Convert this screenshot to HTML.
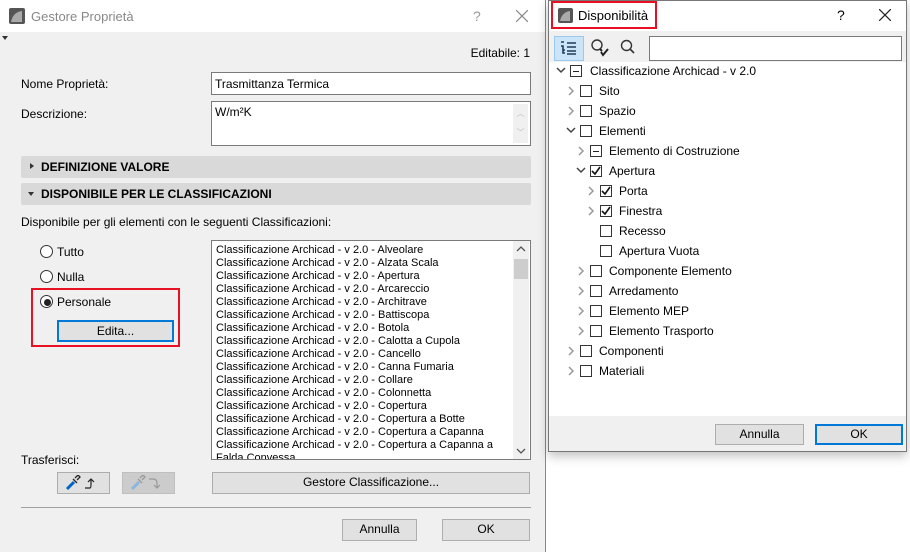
<!DOCTYPE html>
<html><head><meta charset="utf-8"><style>
*{box-sizing:border-box;margin:0;padding:0}
body{width:910px;height:552px;position:relative;background:#fff;font-family:"Liberation Sans",sans-serif;font-size:12px;color:#000;overflow:hidden}
.a{position:absolute;white-space:nowrap}
.btn{position:absolute;background:#e1e1e1;border:1px solid #adadad;text-align:center;line-height:19px}
.cb{position:absolute;width:12px;height:12px;border:1px solid #333;background:#fff}
.t{position:absolute;white-space:nowrap;line-height:14px}
.rad{position:absolute;width:13px;height:13px;border:1px solid #333;border-radius:50%;background:#fff}
</style></head><body>
<!-- Left dialog -->
<div class="a" style="left:0;top:0;width:546px;height:552px;background:#f0f0f0;border-right:1px solid #888"></div>
<div class="a" style="left:0;top:0;width:545px;height:32px;background:#fff"></div>
<svg class="a" style="left:9px;top:8px" width="16" height="16"><rect width="16" height="16" rx="2" fill="#555"/><path d="M2 14 Q4 4 13 3 L13 14 Z" fill="#aaa"/></svg>
<div class="a" style="left:31px;top:9px;color:#888;font-size:13px">Gestore Proprietà</div>
<div class="a" style="left:473px;top:8px;color:#999;font-size:14px">?</div>
<svg class="a" style="left:516px;top:10px" width="12" height="12"><path d="M0 0L12 12M12 0L0 12" stroke="#888" stroke-width="1.2"/></svg>
<div class="a" style="left:2px;top:36px;width:0;height:0;border-left:3px solid transparent;border-right:3px solid transparent;border-top:4px solid #333"></div>
<div class="a" style="top:46px;left:450px;text-align:right;width:80px">Editabile: 1</div>
<div class="a" style="left:21px;top:77px">Nome Proprietà:</div>
<div class="a" style="left:211px;top:72px;width:320px;height:23px;background:#fff;border:1px solid #7a7a7a;padding:4px 3px">Trasmittanza Termica</div>
<div class="a" style="left:21px;top:107px">Descrizione:</div>
<div class="a" style="left:211px;top:101px;width:320px;height:45px;background:#fff;border:1px solid #7a7a7a;padding:3px 3px">W/m²K</div>
<div class="a" style="left:513px;top:104px;width:15px;height:39px;background:#f0f0f0;color:#bbb;font-size:8px;text-align:center;line-height:19px">︿<br>﹀</div>
<div class="a" style="left:21px;top:156px;width:510px;height:22px;background:#d9d9d9;border-radius:2px"></div>
<div class="a" style="left:30px;top:163px;width:0;height:0;border-top:3px solid transparent;border-bottom:3px solid transparent;border-left:4px solid #333"></div>
<div class="a" style="left:41px;top:160px;font-weight:bold">DEFINIZIONE VALORE</div>
<div class="a" style="left:21px;top:183px;width:510px;height:22px;background:#d9d9d9;border-radius:2px"></div>
<div class="a" style="left:28px;top:192px;width:0;height:0;border-left:3px solid transparent;border-right:3px solid transparent;border-top:4px solid #333"></div>
<div class="a" style="left:41px;top:187px;font-weight:bold">DISPONIBILE PER LE CLASSIFICAZIONI</div>
<div class="a" style="left:21px;top:215px">Disponibile per gli elementi con le seguenti Classificazioni:</div>
<div class="rad" style="left:40px;top:245px"></div><div class="a" style="left:57px;top:245px">Tutto</div>
<div class="rad" style="left:40px;top:270px"></div><div class="a" style="left:57px;top:270px">Nulla</div>
<div class="rad" style="left:40px;top:295px"></div><div class="a" style="left:44px;top:299px;width:7px;height:7px;border-radius:50%;background:#222"></div><div class="a" style="left:57px;top:295px">Personale</div>
<div class="a" style="left:31px;top:288px;width:149px;height:59px;border:2px solid #e81123"></div>
<div class="btn" style="left:57px;top:320px;width:117px;height:22px;border:2px solid #0078d7;line-height:18px">Edita...</div>
<div class="a" style="left:211px;top:240px;width:320px;height:220px;background:#fff;border:1px solid #7a7a7a;overflow:hidden;padding:3px 4px;line-height:13px;font-size:11px;white-space:normal;padding-right:26px">
Classificazione Archicad - v 2.0 - Alveolare<br>Classificazione Archicad - v 2.0 - Alzata Scala<br>Classificazione Archicad - v 2.0 - Apertura<br>Classificazione Archicad - v 2.0 - Arcareccio<br>Classificazione Archicad - v 2.0 - Architrave<br>Classificazione Archicad - v 2.0 - Battiscopa<br>Classificazione Archicad - v 2.0 - Botola<br>Classificazione Archicad - v 2.0 - Calotta a Cupola<br>Classificazione Archicad - v 2.0 - Cancello<br>Classificazione Archicad - v 2.0 - Canna Fumaria<br>Classificazione Archicad - v 2.0 - Collare<br>Classificazione Archicad - v 2.0 - Colonnetta<br>Classificazione Archicad - v 2.0 - Copertura<br>Classificazione Archicad - v 2.0 - Copertura a Botte<br>Classificazione Archicad - v 2.0 - Copertura a Capanna<br>Classificazione Archicad - v 2.0 - Copertura a Capanna a<br>Falda Convessa</div>
<div class="a" style="left:513px;top:241px;width:16px;height:218px;background:#f0f0f0"></div>
<div class="a" style="left:514px;top:259px;width:14px;height:20px;background:#cdcdcd"></div>
<svg class="a" style="left:516px;top:246px" width="10" height="6"><path d="M1 5l4-4 4 4" stroke="#555" stroke-width="1.3" fill="none"/></svg>
<svg class="a" style="left:516px;top:448px" width="10" height="6"><path d="M1 1l4 4 4-4" stroke="#555" stroke-width="1.3" fill="none"/></svg>
<div class="a" style="left:21px;top:453px">Trasferisci:</div>
<div class="btn" style="left:57px;top:472px;width:53px;height:22px"></div>
<svg class="a" style="left:64px;top:475px" width="40" height="16"><path d="M3 14 L10 7" stroke="#0063c6" stroke-width="3"/><path d="M9 4 L13 8 M11 3 L14 0 L16 2 L13 5" stroke="#222" stroke-width="1.3" fill="none"/><path d="M21 13 H26 Q27 13 27 9 V5 M24 7 L27 4 L30 7" stroke="#222" stroke-width="1.2" fill="none"/></svg>
<div class="btn" style="left:122px;top:472px;width:53px;height:22px;background:#ccc;border-color:#bfbfbf"></div>
<svg class="a" style="left:129px;top:475px" width="40" height="16"><path d="M3 14 L10 7" stroke="#8ab5e0" stroke-width="3"/><path d="M9 4 L13 8 M11 3 L14 0 L16 2 L13 5" stroke="#999" stroke-width="1.3" fill="none"/><path d="M20 4 H24 Q28 4 28 8 V13 M25 10 L28 13 L31 10" stroke="#999" stroke-width="1.2" fill="none"/></svg>
<div class="btn" style="left:212px;top:472px;width:318px;height:22px">Gestore Classificazione...</div>
<div class="a" style="left:21px;top:507px;width:510px;height:1px;background:#a0a0a0"></div>
<div class="btn" style="left:342px;top:519px;width:75px;height:22px">Annulla</div>
<div class="btn" style="left:442px;top:519px;width:88px;height:22px">OK</div>
<!-- Right dialog -->
<div class="a" style="left:548px;top:0;width:359px;height:452px;background:#fff;border:1px solid #777;box-shadow:0 4px 10px rgba(0,0,0,.25)"></div>
<svg class="a" style="left:558px;top:8px" width="15" height="15"><rect width="15" height="15" rx="2" fill="#555"/><path d="M2 13 Q4 4 12 3 L12 13 Z" fill="#aaa"/></svg>
<div class="a" style="left:578px;top:8px;font-size:13px">Disponibilità</div>
<div class="a" style="left:551px;top:1px;width:106px;height:28px;border:2px solid #e81123"></div>
<div class="a" style="left:837px;top:7px;font-size:14px">?</div>
<svg class="a" style="left:879px;top:9px" width="12" height="12"><path d="M0 0L12 12M12 0L0 12" stroke="#222" stroke-width="1.2"/></svg>
<div class="a" style="left:549px;top:31px;width:357px;height:31px;background:#f0f0f0"></div>
<div class="a" style="left:554px;top:36px;width:30px;height:25px;background:#cce4f7;border:1px solid #99c9ef"></div>
<svg class="a" style="left:560px;top:41px" width="18" height="14"><path d="M1 1h3M1 5h2v4h2M3 9v3h2M7 2h9M7 6h9M7 10h9M7 13h9" stroke="#1e3c5a" stroke-width="1.6" fill="none"/></svg>
<svg class="a" style="left:590px;top:38px" width="20" height="20"><circle cx="7" cy="7" r="5" stroke="#333" stroke-width="1.4" fill="none"/><path d="M10 11l2 2M11 14l2 3 5-6" stroke="#222" stroke-width="2" fill="none"/></svg>
<svg class="a" style="left:620px;top:39px" width="16" height="16"><circle cx="6.5" cy="6.5" r="5" stroke="#333" stroke-width="1.4" fill="none"/><path d="M10 10l4 4" stroke="#333" stroke-width="1.6"/></svg>
<div class="a" style="left:649px;top:36px;width:253px;height:25px;background:#fff;border:1px solid #7a7a7a"></div>
<!-- tree -->
<svg class="a" style="left:556px;top:67px" width="10" height="8"><path d="M1 1l4 4 4-4" stroke="#444" stroke-width="1.5" fill="none"/></svg>
<div class="cb" style="left:570px;top:65px"></div><div class="a" style="left:573px;top:71px;width:6px;height:1px;background:#222"></div>
<div class="t" style="left:590px;top:64px">Classificazione Archicad - v 2.0</div>

<svg class="a" style="left:568px;top:86px" width="8" height="10"><path d="M1 1l4 4-4 4" stroke="#999" stroke-width="1.5" fill="none"/></svg>
<div class="cb" style="left:580px;top:85px"></div><div class="t" style="left:599px;top:84px">Sito</div>
<svg class="a" style="left:568px;top:106px" width="8" height="10"><path d="M1 1l4 4-4 4" stroke="#999" stroke-width="1.5" fill="none"/></svg>
<div class="cb" style="left:580px;top:105px"></div><div class="t" style="left:599px;top:104px">Spazio</div>
<svg class="a" style="left:566px;top:127px" width="10" height="8"><path d="M1 1l4 4 4-4" stroke="#444" stroke-width="1.5" fill="none"/></svg>
<div class="cb" style="left:580px;top:125px"></div><div class="t" style="left:599px;top:124px">Elementi</div>

<svg class="a" style="left:578px;top:146px" width="8" height="10"><path d="M1 1l4 4-4 4" stroke="#999" stroke-width="1.5" fill="none"/></svg>
<div class="cb" style="left:590px;top:145px"></div><div class="a" style="left:593px;top:151px;width:6px;height:1px;background:#222"></div><div class="t" style="left:609px;top:144px">Elemento di Costruzione</div>
<svg class="a" style="left:576px;top:167px" width="10" height="8"><path d="M1 1l4 4 4-4" stroke="#444" stroke-width="1.5" fill="none"/></svg>
<div class="cb" style="left:590px;top:165px"></div><svg class="a" style="left:591px;top:166px" width="10" height="10"><path d="M1 5l3 3 5-7" stroke="#111" stroke-width="1.6" fill="none"/></svg><div class="t" style="left:609px;top:164px">Apertura</div>

<svg class="a" style="left:588px;top:186px" width="8" height="10"><path d="M1 1l4 4-4 4" stroke="#999" stroke-width="1.5" fill="none"/></svg>
<div class="cb" style="left:600px;top:185px"></div><svg class="a" style="left:601px;top:186px" width="10" height="10"><path d="M1 5l3 3 5-7" stroke="#111" stroke-width="1.6" fill="none"/></svg><div class="t" style="left:619px;top:184px">Porta</div>
<svg class="a" style="left:588px;top:206px" width="8" height="10"><path d="M1 1l4 4-4 4" stroke="#999" stroke-width="1.5" fill="none"/></svg>
<div class="cb" style="left:600px;top:205px"></div><svg class="a" style="left:601px;top:206px" width="10" height="10"><path d="M1 5l3 3 5-7" stroke="#111" stroke-width="1.6" fill="none"/></svg><div class="t" style="left:619px;top:204px">Finestra</div>
<div class="cb" style="left:600px;top:225px"></div><div class="t" style="left:619px;top:224px">Recesso</div>
<div class="cb" style="left:600px;top:245px"></div><div class="t" style="left:619px;top:244px">Apertura Vuota</div>

<svg class="a" style="left:578px;top:266px" width="8" height="10"><path d="M1 1l4 4-4 4" stroke="#999" stroke-width="1.5" fill="none"/></svg>
<div class="cb" style="left:590px;top:265px"></div><div class="t" style="left:609px;top:264px">Componente Elemento</div>
<svg class="a" style="left:578px;top:286px" width="8" height="10"><path d="M1 1l4 4-4 4" stroke="#999" stroke-width="1.5" fill="none"/></svg>
<div class="cb" style="left:590px;top:285px"></div><div class="t" style="left:609px;top:284px">Arredamento</div>
<svg class="a" style="left:578px;top:306px" width="8" height="10"><path d="M1 1l4 4-4 4" stroke="#999" stroke-width="1.5" fill="none"/></svg>
<div class="cb" style="left:590px;top:305px"></div><div class="t" style="left:609px;top:304px">Elemento MEP</div>
<svg class="a" style="left:578px;top:326px" width="8" height="10"><path d="M1 1l4 4-4 4" stroke="#999" stroke-width="1.5" fill="none"/></svg>
<div class="cb" style="left:590px;top:325px"></div><div class="t" style="left:609px;top:324px">Elemento Trasporto</div>

<svg class="a" style="left:568px;top:346px" width="8" height="10"><path d="M1 1l4 4-4 4" stroke="#999" stroke-width="1.5" fill="none"/></svg>
<div class="cb" style="left:580px;top:345px"></div><div class="t" style="left:599px;top:344px">Componenti</div>
<svg class="a" style="left:568px;top:366px" width="8" height="10"><path d="M1 1l4 4-4 4" stroke="#999" stroke-width="1.5" fill="none"/></svg>
<div class="cb" style="left:580px;top:365px"></div><div class="t" style="left:599px;top:364px">Materiali</div>

<div class="a" style="left:549px;top:416px;width:357px;height:35px;background:#f0f0f0"></div>
<div class="btn" style="left:715px;top:424px;width:89px;height:21px;line-height:18px">Annulla</div>
<div class="btn" style="left:815px;top:424px;width:88px;height:21px;border:2px solid #0078d7;line-height:17px">OK</div>
</body></html>
